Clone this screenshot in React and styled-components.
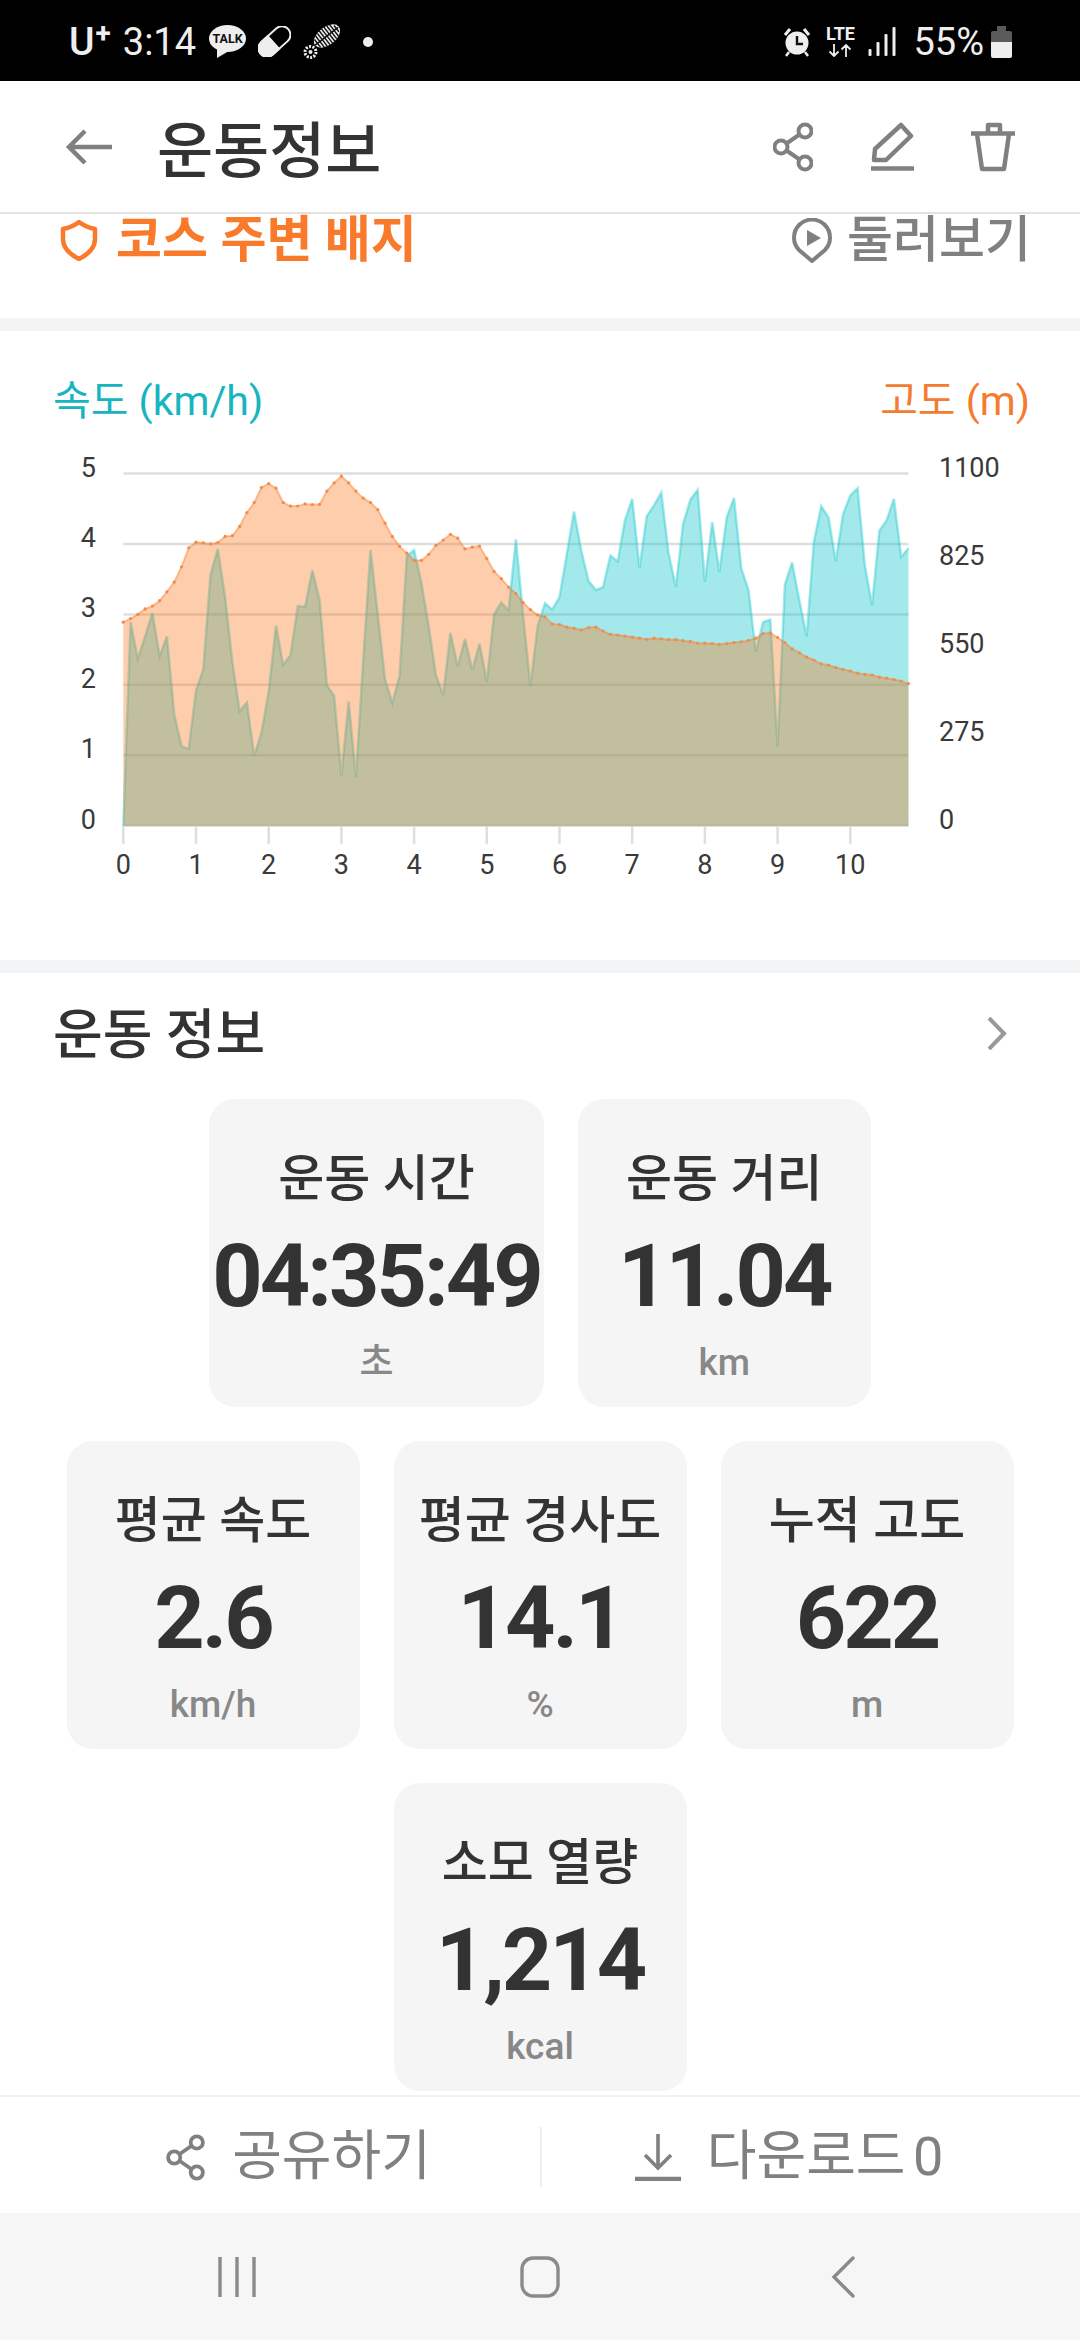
import styled, { createGlobalStyle } from 'styled-components';

// y values traced off the screenshot, one sample every 0.1 km
const speedTrace = [
  1360, 790, 893, 830, 765, 885, 830, 1048, 1138, 1145, 982, 922, 658, 585, 720, 900, 1040, 1015, 1165, 1100,
  985, 800, 910, 882, 745, 747, 645, 728, 968, 995, 1220, 1012, 1225, 900, 588, 770, 950, 1017, 940, 605,
  588, 680, 800, 938, 995, 820, 915, 837, 925, 850, 957, 768, 735, 757, 558, 770, 970, 800, 737, 755,
  720, 600, 480, 590, 675, 700, 692, 603, 620, 505, 445, 638, 493, 463, 427, 595, 692, 515, 447, 420,
  677, 510, 650, 497, 442, 640, 700, 873, 790, 783, 1138, 685, 623, 730, 830, 565, 465, 497, 620, 488,
  435, 415, 630, 743, 533, 505, 445, 607, 583,
];
const altitudeTrace = [
  790, 780, 768, 753, 745, 730, 705, 678, 635, 582, 566, 568, 571, 567, 550, 548, 522, 483, 455, 413,
  402, 415, 455, 465, 465, 459, 461, 460, 423, 400, 381, 400, 423, 443, 455, 475, 513, 550, 578, 597,
  617, 617, 600, 575, 560, 544, 555, 585, 580, 577, 612, 648, 668, 692, 710, 735, 755, 770, 775, 795,
  797, 804, 807, 812, 805, 804, 815, 824, 826, 829, 832, 835, 838, 835, 837, 839, 839, 842, 844, 849,
  849, 850, 852, 850, 847, 845, 841, 835, 822, 820, 833, 847, 865, 876, 888, 896, 907, 910, 917, 922,
  927, 933, 936, 938, 944, 947, 951, 955, 962,
];

const chartLeft = 123.3;
const kmStep = 72.7;
const chartRight = chartLeft + 10.8 * kmStep;
const toX = (i) => chartLeft + (i * kmStep) / 10;
const toY = (v) => v / 2.8 - 100;
const gridY = (n) => toY(374) + (n * 197.2) / 2.8;
const baseY = gridY(5);

const linePoints = (trace) => trace.map((v, i) => `${toX(i).toFixed(1)},${toY(v).toFixed(1)}`).join(' ');
const areaPoints = (trace) => `${chartLeft},${baseY} ${linePoints(trace)} ${chartRight},${baseY}`;

const stats = [
  { label: '운동 시간', value: '04:35:49', unit: '초' },
  { label: '운동 거리', value: '11.04', unit: 'km' },
  { label: '평균 속도', value: '2.6', unit: 'km/h' },
  { label: '평균 경사도', value: '14.1', unit: '%' },
  { label: '누적 고도', value: '622', unit: 'm' },
  { label: '소모 열량', value: '1,214', unit: 'kcal' },
];

const ShareIcon = ({ width, height }) => (
  <svg width={width} height={height} viewBox="0 0 40 50" fill="none" stroke="#808080" strokeWidth="4">
    <circle cx="32" cy="9" r="6.5" />
    <circle cx="8" cy="25" r="6.5" />
    <circle cx="32" cy="41" r="6.5" />
    <path d="M26.5 12.5 13.5 21.5M13.5 28.5 26.5 37.5" />
  </svg>
);

function SpeedChart() {
  return (
    <ChartSvg viewBox="0 0 1080 450">
      {[0, 1, 2, 3, 4, 5].map((n) => (
        <line key={n} x1={chartLeft} x2={chartRight} y1={gridY(n)} y2={gridY(n)} stroke="#dedede" strokeWidth="2.5" />
      ))}
      {[0, 1, 2, 3, 4, 5, 6, 7, 8, 9, 10].map((km) => (
        <g key={km}>
          <line x1={toX(km * 10)} x2={toX(km * 10)} y1={baseY} y2={baseY + 18} stroke="#dedede" strokeWidth="2.5" />
          <AxisText x={toX(km * 10)} y={baseY + 48} textAnchor="middle">{km}</AxisText>
        </g>
      ))}
      {[5, 4, 3, 2, 1, 0].map((n, i) => (
        <AxisText key={n} x="96" y={gridY(i) + 3} textAnchor="end">{n}</AxisText>
      ))}
      {[1100, 825, 550, 275, 0].map((n, i) => (
        <AxisText key={n} x="939" y={36.6 + i * 88}>{n}</AxisText>
      ))}
      <polygon points={areaPoints(speedTrace)} fill="#19c8cd" fillOpacity="0.4" />
      <polyline points={linePoints(speedTrace)} fill="none" stroke="#19c8cd" strokeOpacity="0.4" strokeWidth="2.5" />
      <polygon points={areaPoints(altitudeTrace)} fill="#fa7419" fillOpacity="0.36" />
      <polyline points={linePoints(altitudeTrace)} fill="none" stroke="#fa7419" strokeOpacity="0.4" strokeWidth="2" />
      {altitudeTrace.map((v, i) => (
        <circle key={i} cx={toX(i)} cy={toY(v)} r="1.6" fill="#f58a4a" />
      ))}
    </ChartSvg>
  );
}

export default function App() {
  return (
    <Page>
      <GlobalStyle />
      <StatusBar>
        <StatusGroup>
          <Carrier>U<CarrierPlus>+</CarrierPlus></Carrier>
          <StatusTime>3:14</StatusTime>
          <svg width="37" height="34" viewBox="0 0 37 34">
            <ellipse cx="18.5" cy="13.5" rx="18.5" ry="13.5" fill="#eee" />
            <path d="M8 22 8 33 20 26Z" fill="#eee" />
            <text x="18.5" y="18" textAnchor="middle" fontFamily="Roboto" fontWeight="700" fontSize="12.5" fill="#111">TALK</text>
          </svg>
          <svg width="33" height="31" viewBox="0 0 33 31">
            <g transform="rotate(-42 16.5 15.5)">
              <rect x="-2" y="7" width="37" height="17" rx="8.5" fill="none" stroke="#eee" strokeWidth="2" />
              <path d="M16 6H6.5a9.5 9.5 0 0 0 0 19H16Z" fill="#eee" />
            </g>
          </svg>
          <svg width="38" height="37" viewBox="0 0 38 37">
            <g transform="rotate(-38 24 13)">
              <ellipse cx="24" cy="13" rx="15" ry="9" fill="#eee" />
              <path d="M12 8v10M15 6v14M18 5v16M21 4v18M24 4v18M27 4v18M30 5v16M33 6v14M36 9v8" stroke="#111" strokeWidth="1.4" />
              <path d="M9 13H38" stroke="#111" strokeWidth="1.6" />
            </g>
            <circle cx="7.5" cy="29" r="5.5" fill="none" stroke="#eee" strokeWidth="3" strokeDasharray="2 1.4" />
            <circle cx="7.5" cy="29" r="2" fill="#eee" />
          </svg>
          <NotificationDot />
        </StatusGroup>
        <StatusGroup>
          <svg width="30" height="30" viewBox="0 0 28 30">
            <path d="M2 8 7 2M26 8 21 2" stroke="#eee" strokeWidth="3" />
            <path d="M6 25 3 29M22 25 25 29" stroke="#eee" strokeWidth="2.5" />
            <circle cx="14" cy="16" r="11.5" fill="#eee" />
            <path d="M14 9v8h6" fill="none" stroke="#111" strokeWidth="2.4" />
          </svg>
          <NetworkBlock>
            <NetworkLabel>LTE</NetworkLabel>
            <svg width="24" height="13" viewBox="0 0 24 13" fill="none" stroke="#eee" strokeWidth="1.8">
              <path d="M6 0v12M1.5 7.5 6 12l4.5-4.5M18 13V1M13.5 5.5 18 1l4.5 4.5" />
            </svg>
          </NetworkBlock>
          <svg width="28" height="29" viewBox="0 0 28 29">
            <rect x="0.5" y="22" width="3" height="7" rx="1" fill="#eee" />
            <rect x="8.5" y="15" width="3" height="14" rx="1" fill="#eee" />
            <rect x="16.5" y="7" width="3" height="22" rx="1" fill="#eee" />
            <rect x="24.5" y="0" width="3" height="29" rx="1" fill="#eee" />
          </svg>
          <BatteryText>55%</BatteryText>
          <svg width="21" height="32" viewBox="0 0 21 32">
            <path d="M6 0h9v5h4a2 2 0 0 1 2 2v10H0V7a2 2 0 0 1 2-2h4Z" fill="#5a5a5a" />
            <path d="M0 16h21v14a2 2 0 0 1-2 2H2a2 2 0 0 1-2-2Z" fill="#eee" />
          </svg>
        </StatusGroup>
      </StatusBar>

      <Header>
        <svg width="47" height="36" viewBox="0 0 47 36" fill="none" stroke="#808080" strokeWidth="4.5">
          <path d="M47 18H5M20 2 4 18l16 16" />
        </svg>
        <Title>운동정보</Title>
        <HeaderActions>
          <ShareIcon width={40} height={50} />
          <svg width="44" height="50" viewBox="0 0 44 50" fill="none" stroke="#808080" strokeWidth="4.5" strokeLinejoin="round">
            <path d="M31 3 41 14 16 38H4L5 27Z" />
            <path d="M1 46.5H44" />
          </svg>
          <svg width="44" height="50" viewBox="0 0 44 50" fill="none" stroke="#808080" strokeWidth="4.5" strokeLinejoin="round">
            <path d="M0 11.5H44M17 10V3H29V10" />
            <path d="M6 12 11 47H33L38 12" />
          </svg>
        </HeaderActions>
      </Header>

      <Content>
        <BadgeRow>
          <BadgeTitle>
            <svg width="38" height="42" viewBox="0 0 38 42" fill="none" stroke="#f97a2a" strokeWidth="4.5" strokeLinejoin="round">
              <path d="M19 3C24 7 30 9 35 10V20C35 30 27 36 19 40 11 36 3 30 3 20V10C8 9 14 7 19 3Z" />
            </svg>
            <BadgeText>코스 주변 배지</BadgeText>
          </BadgeTitle>
          <LookAround>
            <svg width="40" height="45" viewBox="0 0 40 45">
              <path d="M20 43 7 32A18 18 0 1 1 33 32Z" fill="none" stroke="#808080" strokeWidth="4" strokeLinejoin="round" />
              <path d="M15 12V28L29 20Z" fill="#808080" />
            </svg>
            <LookText>둘러보기</LookText>
          </LookAround>
        </BadgeRow>
        <Band />
        <ChartSection>
          <Legend>
            <LegendLabel color="#17b5bf">속도 (km/h)</LegendLabel>
            <LegendLabel color="#f47c30">고도 (m)</LegendLabel>
          </Legend>
          <SpeedChart />
        </ChartSection>
        <Band />
        <InfoHead>
          <InfoTitle>운동 정보</InfoTitle>
          <Chevron width="20" height="33" viewBox="0 0 20 33" fill="none" stroke="#999" strokeWidth="4">
            <path d="M2 1 17 16.5 2 32" />
          </Chevron>
        </InfoHead>
        <CardGrid>
          {stats.map((s) => (
            <StatCard key={s.label}>
              <StatLabel>{s.label}</StatLabel>
              <StatValue>{s.value}</StatValue>
              <StatUnit>{s.unit}</StatUnit>
            </StatCard>
          ))}
        </CardGrid>
      </Content>

      <ActionBar>
        <ActionButton>
          <ShareIcon width={41} height={47} />
          <ActionText>공유하기</ActionText>
        </ActionButton>
        <ActionDivider />
        <ActionButton>
          <svg width="46" height="47" viewBox="0 0 46 47" fill="none" stroke="#808080" strokeWidth="3.6">
            <path d="M23 0V34M10 21 23 34 36 21" />
            <path d="M0 45H46" strokeWidth="4.5" />
          </svg>
          <ActionText>다운로드 0</ActionText>
        </ActionButton>
      </ActionBar>

      <NavBar>
        <NavItem>
          <svg width="38" height="40" viewBox="0 0 38 40" fill="none" stroke="#8a8a8a" strokeWidth="3.4">
            <path d="M2 0V40M19 0V40M36 0V40" />
          </svg>
        </NavItem>
        <NavItem>
          <svg width="40" height="42" viewBox="0 0 40 42" fill="none" stroke="#8a8a8a" strokeWidth="3.4">
            <rect x="2" y="2" width="36" height="38" rx="11" />
          </svg>
        </NavItem>
        <NavItem>
          <svg width="24" height="42" viewBox="0 0 24 42" fill="none" stroke="#8a8a8a" strokeWidth="3.4" strokeLinecap="round">
            <path d="M22 2 3 21 22 40" />
          </svg>
        </NavItem>
      </NavBar>
    </Page>
  );
}

const GlobalStyle = createGlobalStyle`
  html, body {
    margin: 0;
    padding: 0;
    background: #fff;
  }
  * {
    box-sizing: border-box;
  }
`;

const Page = styled.div`
  width: 1080px;
  height: 2340px;
  display: flex;
  flex-direction: column;
  overflow: hidden;
  background: #fff;
  font-family: Roboto, 'Noto Sans CJK KR', sans-serif;
`;

const StatusBar = styled.div`
  height: 81px;
  flex-shrink: 0;
  background: #000;
  color: #eee;
  display: flex;
  justify-content: space-between;
  align-items: center;
  padding: 2px 68px 0 69px;
`;

const StatusGroup = styled.div`
  display: flex;
  align-items: center;
  gap: 12px;
`;

const Carrier = styled.div`
  display: flex;
  font-size: 39px;
  font-weight: 500;
  line-height: 40px;
`;

const CarrierPlus = styled.span`
  font-size: 28px;
  font-weight: 700;
  line-height: 24px;
  margin-left: 1px;
`;

const StatusTime = styled.div`
  font-size: 38px;
  line-height: 40px;
  margin-right: 1px;
`;

const NotificationDot = styled.div`
  width: 10px;
  height: 10px;
  margin-left: 10px;
  border-radius: 50%;
  background: #eee;
`;

const NetworkBlock = styled.div`
  width: 32px;
  display: flex;
  flex-direction: column;
  align-items: center;
  gap: 3px;
`;

const NetworkLabel = styled.div`
  font-size: 18px;
  font-weight: 700;
  line-height: 14px;
`;

const BatteryText = styled.div`
  font-size: 38px;
  line-height: 40px;
  margin-left: 5px;
  margin-right: -5px;
`;

const Header = styled.div`
  height: 133px;
  flex-shrink: 0;
  display: flex;
  align-items: center;
  padding: 0 65px;
  border-bottom: 2px solid #e2e2e2;
`;

const Title = styled.div`
  margin-left: 45px;
  font-size: 61px;
  font-weight: 500;
  color: #333;
`;

const HeaderActions = styled.div`
  margin-left: auto;
  display: flex;
  align-items: center;
  gap: 57px;
`;

const Content = styled.div`
  flex: 1;
  min-height: 0;
`;

const BadgeRow = styled.div`
  height: 104px;
  display: flex;
  justify-content: space-between;
  align-items: flex-start;
  padding: 2px 49px 0 60px;
`;

const BadgeTitle = styled.div`
  display: flex;
  align-items: center;
  gap: 18px;
`;

const BadgeText = styled.div`
  font-size: 50px;
  font-weight: 700;
  line-height: 48px;
  color: #f97a2a;
`;

const LookAround = styled.div`
  display: flex;
  align-items: center;
  gap: 15px;
`;

const LookText = styled.div`
  font-size: 50px;
  font-weight: 500;
  line-height: 48px;
  color: #808080;
`;

const Band = styled.div`
  height: 13px;
  background: #f2f3f5;
`;

const ChartSection = styled.div`
  height: 629px;
`;

const Legend = styled.div`
  height: 109px;
  display: flex;
  justify-content: space-between;
  padding: 48px 50px 0 53px;
`;

const LegendLabel = styled.div`
  font-size: 41px;
  line-height: 44px;
  color: ${({ color }) => color};
`;

const ChartSvg = styled.svg`
  display: block;
  width: 1080px;
  height: 450px;
`;

const AxisText = styled.text`
  font-family: Roboto, sans-serif;
  font-size: 27px;
  fill: #3a3a3a;
`;

const InfoHead = styled.div`
  height: 126px;
  display: flex;
  justify-content: space-between;
  align-items: center;
  padding: 0 73px 0 53px;
`;

const Chevron = styled.svg`
  margin-bottom: 6px;
`;

const InfoTitle = styled.div`
  font-size: 54px;
  font-weight: 500;
  line-height: 60px;
  color: #333;
`;

const CardGrid = styled.div`
  display: flex;
  flex-wrap: wrap;
  justify-content: center;
  gap: 34px;
  margin: 0 auto;
  width: 948px;
`;

const StatCard = styled.div`
  min-width: 293px;
  height: 308px;
  padding: 55px 3px 0;
  border-radius: 26px;
  background: #f5f5f5;
  display: flex;
  flex-direction: column;
  align-items: center;
`;

const StatLabel = styled.div`
  font-size: 50px;
  font-weight: 500;
  line-height: 50px;
  color: #333;
  white-space: nowrap;
`;

const StatValue = styled.div`
  margin-top: 27px;
  font-size: 88px;
  font-weight: 700;
  line-height: 90px;
  letter-spacing: -3px;
  color: #333;
`;

const StatUnit = styled.div`
  margin-top: 22px;
  font-size: 37px;
  font-weight: 500;
  line-height: 40px;
  color: #888;
`;

const ActionBar = styled.div`
  height: 118px;
  flex-shrink: 0;
  display: grid;
  grid-template-columns: 484px 2px 1fr;
  align-items: center;
  padding: 4px 44px 0 56px;
  border-top: 2px solid #f2f2f2;
`;

const ActionButton = styled.div`
  display: flex;
  justify-content: center;
  align-items: center;
  gap: 26px;
`;

const ActionText = styled.div`
  font-size: 54px;
  line-height: 52px;
  word-spacing: -6px;
  color: #808080;
`;

const ActionDivider = styled.div`
  width: 2px;
  height: 60px;
  background: #eeeeee;
`;

const NavBar = styled.div`
  height: 127px;
  flex-shrink: 0;
  display: grid;
  grid-template-columns: repeat(3, 303px);
  justify-content: center;
  align-items: center;
  background: #f6f6f6;
`;

const NavItem = styled.div`
  display: flex;
  justify-content: center;
`;
